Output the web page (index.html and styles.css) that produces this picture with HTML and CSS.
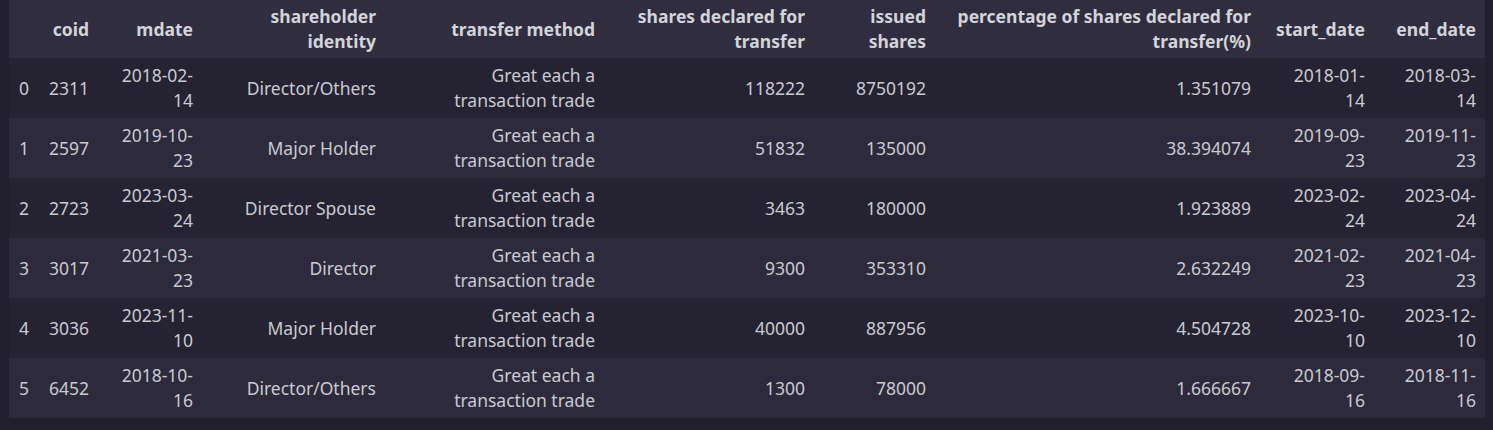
FILE: index.html
```html
<!DOCTYPE html>
<html lang="en">
<head>
<meta charset="utf-8">
<title>DataFrame</title>
<link rel="stylesheet" href="styles.css">
</head>
<body>
<div class="output">
<table class="dataframe">
  <colgroup>
    <col class="c-idx"><col class="c-coid"><col class="c-mdate"><col class="c-holder"><col class="c-method"><col class="c-declared"><col class="c-issued"><col class="c-pct"><col class="c-start"><col class="c-end">
  </colgroup>
  <thead>
    <tr>
      <th></th>
      <th>coid</th>
      <th>mdate</th>
      <th>shareholder<br>identity</th>
      <th>transfer method</th>
      <th>shares declared for<br>transfer</th>
      <th>issued<br>shares</th>
      <th>percentage of shares declared for<br>transfer(%)</th>
      <th>start_date</th>
      <th>end_date</th>
    </tr>
  </thead>
  <tbody>
    <tr>
      <th>0</th><td>2311</td><td>2018-02-<br>14</td><td>Director/Others</td><td>Great each a<br>transaction trade</td><td>118222</td><td>8750192</td><td>1.351079</td><td>2018-01-<br>14</td><td>2018-03-<br>14</td>
    </tr>
    <tr>
      <th>1</th><td>2597</td><td>2019-10-<br>23</td><td>Major Holder</td><td>Great each a<br>transaction trade</td><td>51832</td><td>135000</td><td>38.394074</td><td>2019-09-<br>23</td><td>2019-11-<br>23</td>
    </tr>
    <tr>
      <th>2</th><td>2723</td><td>2023-03-<br>24</td><td>Director Spouse</td><td>Great each a<br>transaction trade</td><td>3463</td><td>180000</td><td>1.923889</td><td>2023-02-<br>24</td><td>2023-04-<br>24</td>
    </tr>
    <tr>
      <th>3</th><td>3017</td><td>2021-03-<br>23</td><td>Director</td><td>Great each a<br>transaction trade</td><td>9300</td><td>353310</td><td>2.632249</td><td>2021-02-<br>23</td><td>2021-04-<br>23</td>
    </tr>
    <tr>
      <th>4</th><td>3036</td><td>2023-11-<br>10</td><td>Major Holder</td><td>Great each a<br>transaction trade</td><td>40000</td><td>887956</td><td>4.504728</td><td>2023-10-<br>10</td><td>2023-12-<br>10</td>
    </tr>
    <tr>
      <th>5</th><td>6452</td><td>2018-10-<br>16</td><td>Director/Others</td><td>Great each a<br>transaction trade</td><td>1300</td><td>78000</td><td>1.666667</td><td>2018-09-<br>16</td><td>2018-11-<br>16</td>
    </tr>
  </tbody>
</table>
</div>
</body>
</html>
```

FILE: styles.css
```css
html, body {
  margin: 0;
  padding: 0;
  background: #211f2d;
}

.output {
  padding: 0 8px 0 9px;
}

.dataframe {
  table-layout: fixed;
  width: 1476px;
  border-collapse: collapse;
  border-spacing: 0;
  font-family: "Noto Sans", "Open Sans", sans-serif;
  font-size: 17.5px;
  line-height: 25px;
  color: #c9c9d0;
}

.c-idx { width: 29px; }
.c-coid { width: 60px; }
.c-mdate { width: 104px; }
.c-holder { width: 183px; }
.c-method { width: 219px; }
.c-declared { width: 210px; }
.c-issued { width: 121px; }
.c-pct { width: 325px; }
.c-start { width: 114px; }
.c-end { width: 111px; }

.dataframe th,
.dataframe td {
  text-align: right;
  vertical-align: middle;
  white-space: nowrap;
  padding: 5px 9px;
}

.dataframe thead th {
  background: #302e3e;
  color: #d3d3da;
  font-weight: 700;
  padding: 4px 9px;
}

.dataframe tbody th {
  font-weight: 400;
}

.dataframe tbody tr:nth-child(odd) {
  background: #252331;
}

.dataframe tbody tr:nth-child(even) {
  background: #2d2b3b;
}
```
